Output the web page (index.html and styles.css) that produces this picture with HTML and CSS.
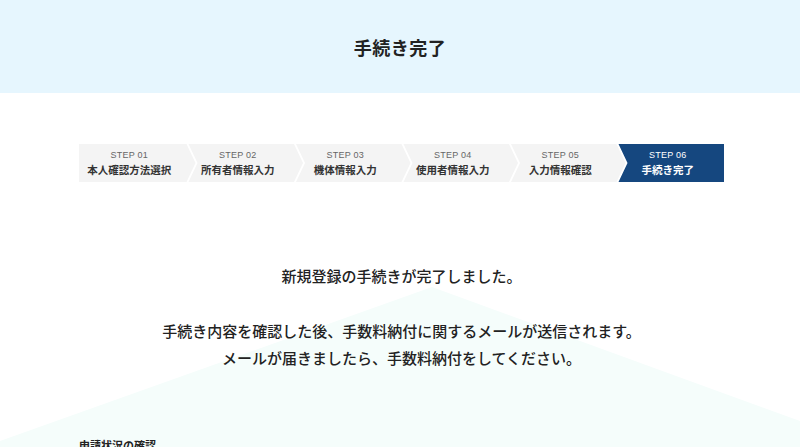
FILE: index.html
```html
<!DOCTYPE html>
<html lang="ja">
<head>
    <meta charset="UTF-8">
    <meta name="viewport" content="width=device-width, initial-scale=1.0">
    <title>手続き完了</title>
    <link rel="stylesheet" href="styles.css">
</head>
<body>
    <header class="page-head">
        <h1>手続き完了</h1>
    </header>

    <main class="page-main">
        <svg class="bg-mountain" viewBox="0 0 800 200" preserveAspectRatio="none" aria-hidden="true">
            <polygon points="0,158 432,4 800,138 800,200 0,200" fill="#f5fdfb"/>
        </svg>

        <ol class="steps">
            <li class="step first"><span class="num">STEP 01</span><span class="label">本人確認方法選択</span></li>
            <li class="step"><span class="num">STEP 02</span><span class="label">所有者情報入力</span></li>
            <li class="step"><span class="num">STEP 03</span><span class="label">機体情報入力</span></li>
            <li class="step"><span class="num">STEP 04</span><span class="label">使用者情報入力</span></li>
            <li class="step"><span class="num">STEP 05</span><span class="label">入力情報確認</span></li>
            <li class="step last active"><span class="num">STEP 06</span><span class="label">手続き完了</span></li>
        </ol>

        <div class="message">
            <p class="lead">新規登録の手続きが完了しました。</p>
            <p>手続き内容を確認した後、手数料納付に関するメールが送信されます。<br>メールが届きましたら、手数料納付をしてください。</p>
        </div>

        <h2 class="sub-title">申請状況の確認</h2>
    </main>
</body>
</html>
```

FILE: styles.css
```css
body {
    margin: 0;
    padding: 0;
    font-family: "Noto Sans CJK JP", "Noto Sans", sans-serif;
    color: #222;
    background: #fff;
}

.page-head {
    background-color: #e6f6fe;
    height: 93px;
    display: flex;
    justify-content: center;
    align-items: center;
}

.page-head h1 {
    margin: 0;
    font-size: 18px;
    font-weight: 700;
    letter-spacing: 0.5px;
}

.page-main {
    position: relative;
    padding: 51px 76px 0 79px;
    overflow: hidden;
    height: 303px;
}

/* decorative background shape */
.bg-mountain {
    position: absolute;
    left: 0;
    top: 190px;
    width: 800px;
    height: 200px;
    z-index: 0;
}

.steps {
    position: relative;
    z-index: 1;
    list-style: none;
    margin: 0;
    padding: 0;
    display: flex;
    height: 38px;
}

/* each step = 107.5px box + 9px arrow tip overlapping the next one */
.step {
    flex: 0 0 116.5px;
    box-sizing: border-box;
    margin-right: -9px;
    background: #f4f4f4;
    display: flex;
    flex-direction: column;
    justify-content: center;
    align-items: center;
    padding: 0 16px 0 2px;
    clip-path: polygon(2px 0, calc(100% - 9px) 0, 100% 50%, calc(100% - 9px) 100%, 2px 100%, 11px 50%);
}

.step.first {
    padding-left: 0;
    clip-path: polygon(0 0, calc(100% - 9px) 0, 100% 50%, calc(100% - 9px) 100%, 0 100%);
}

.step.last {
    flex-basis: 107.5px;
    margin-right: 0;
    padding-right: 7px;
    clip-path: polygon(2px 0, 100% 0, 100% 100%, 2px 100%, 11px 50%);
}

.step .num {
    font-family: "Liberation Sans", Arial, sans-serif;
    font-size: 9px;
    color: #666;
    line-height: 13px;
    letter-spacing: 0.2px;
}

.step .label {
    font-size: 10.5px;
    font-weight: 700;
    color: #333;
    line-height: 16px;
    white-space: nowrap;
}

.step.active {
    background: #15477f;
}

.step.active .num,
.step.active .label {
    color: #fff;
}

.message {
    position: relative;
    z-index: 1;
    text-align: center;
    margin-top: 80px;
}

.message p {
    margin: 0;
    font-size: 15px;
    font-weight: 500;
    line-height: 27px;
}

.message .lead {
    margin-bottom: 28px;
}

.sub-title {
    position: relative;
    z-index: 1;
    margin: 66px 0 0;
    font-size: 11px;
    font-weight: 700;
}
```
